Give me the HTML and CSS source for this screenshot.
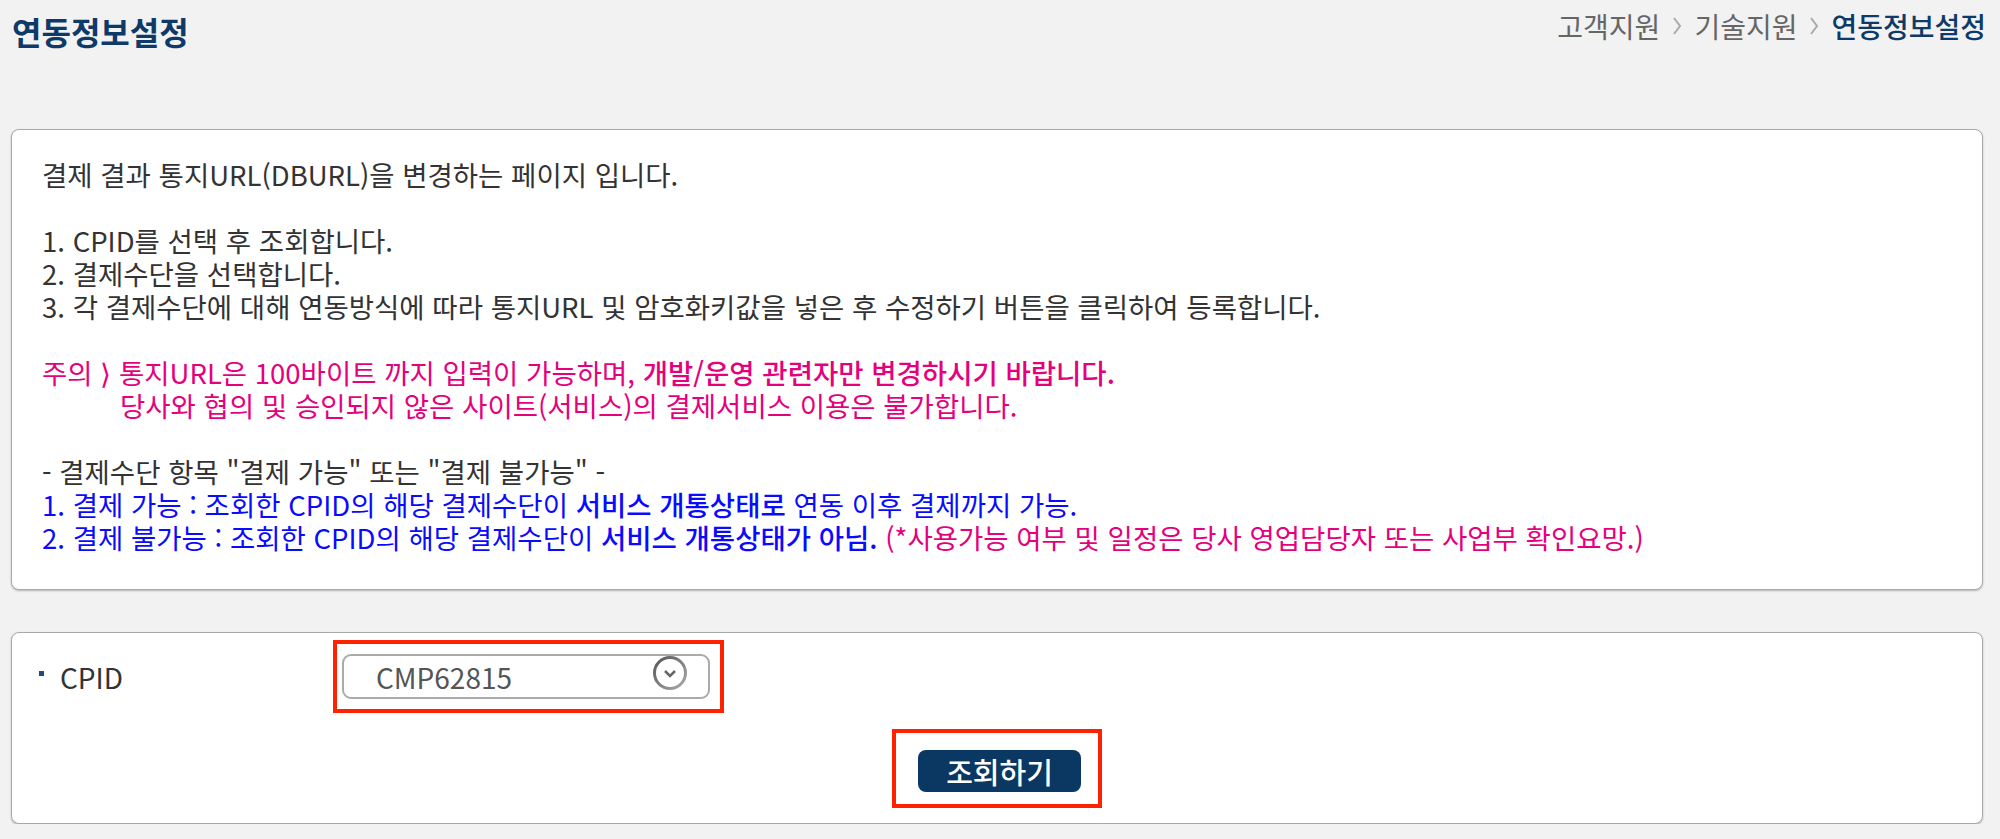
FILE: index.html
```html
<!DOCTYPE html>
<html lang="ko">
<head>
    <meta charset="UTF-8">
    <title>연동정보설정</title>
    <link rel="stylesheet" href="styles.css">
</head>
<body>
    <header class="top">
        <h1 class="title">연동정보설정</h1>
        <div class="crumbs">
            <span>고객지원</span>
            <svg class="sep" width="10" height="24" viewBox="0 0 10 24"><path d="M2 4 L8 12 L2 20" fill="none" stroke="#aaa" stroke-width="2"/></svg>
            <span>기술지원</span>
            <svg class="sep" width="10" height="24" viewBox="0 0 10 24"><path d="M2 4 L8 12 L2 20" fill="none" stroke="#aaa" stroke-width="2"/></svg>
            <span class="current">연동정보설정</span>
        </div>
    </header>

    <section class="panel guide">
        <p>결제 결과 통지URL(DBURL)을 변경하는 페이지 입니다.</p>
        <p class="blank"></p>
        <p>1. CPID를 선택 후 조회합니다.</p>
        <p>2. 결제수단을 선택합니다.</p>
        <p>3. 각 결제수단에 대해 연동방식에 따라 통지URL 및 암호화키값을 넣은 후 수정하기 버튼을 클릭하여 등록합니다.</p>
        <p class="blank"></p>
        <p class="pink">주의 ⟩ 통지URL은 100바이트 까지 입력이 가능하며, <b>개발/운영 관련자만 변경하시기 바랍니다.</b></p>
        <p class="pink indent">당사와 협의 및 승인되지 않은 사이트(서비스)의 결제서비스 이용은 불가합니다.</p>
        <p class="blank"></p>
        <p>- 결제수단 항목 "결제 가능" 또는 "결제 불가능" -</p>
        <p class="blue">1. 결제 가능 : 조회한 CPID의 해당 결제수단이 <b>서비스 개통상태로</b> 연동 이후 결제까지 가능.</p>
        <p class="blue">2. 결제 불가능 : 조회한 CPID의 해당 결제수단이 <b>서비스 개통상태가 아님.</b> <span class="pink">(*사용가능 여부 및 일정은 당사 영업담당자 또는 사업부 확인요망.)</span></p>
    </section>

    <section class="panel search">
        <div class="row">
            <div class="label"><i class="dot"></i>CPID</div>
            <div class="mark mark-select">
                <div class="select">
                    <span>CMP62815</span>
                    <svg class="arrow" width="36" height="36" viewBox="0 0 36 36">
                        <defs>
                            <linearGradient id="ring" x1="0" y1="0" x2="1" y2="1">
                                <stop offset="0" stop-color="#555"/>
                                <stop offset="1" stop-color="#aaa"/>
                            </linearGradient>
                        </defs>
                        <circle cx="18" cy="18" r="15.5" fill="#fff" stroke="url(#ring)" stroke-width="3"/>
                        <path d="M13 16 L18 21 L23 16" fill="none" stroke="#666" stroke-width="2.5"/>
                    </svg>
                </div>
            </div>
        </div>
        <div class="actions">
            <div class="mark mark-btn">
                <button class="btn">조회하기</button>
            </div>
        </div>
    </section>
</body>
</html>
```

FILE: styles.css
```css
body {
    margin: 0;
    background-color: #f2f2f2;
    font-family: "Noto Sans CJK KR", "Noto Sans", sans-serif;
    color: #333;
}
.top {
    display: flex;
    justify-content: space-between;
    align-items: flex-start;
    height: 129px;
    box-sizing: border-box;
    padding: 10px 14px 0 12px;
}
.title {
    margin: 0;
    font-size: 32px;
    line-height: 42px;
    font-weight: 700;
    color: #0d3a69;
}
.crumbs {
    display: flex;
    align-items: center;
    gap: 12px;
    font-size: 28px;
    line-height: 32px;
    color: #666;
}
.crumbs .current {
    color: #0d3a69;
    font-weight: 500;
}
.sep {
    display: block;
}
.panel {
    background-color: #fff;
    border: 1px solid #aaa;
    border-radius: 8px;
    box-shadow: 0 1px 2px rgba(0, 0, 0, 0.25);
    margin: 0 17px 0 11px;
}
.guide {
    padding: 28px 30px 35px;
    font-size: 27.5px;
    line-height: 33px;
}
.guide p {
    margin: 0;
}
.guide .blank {
    height: 33px;
}
.guide b {
    font-weight: 500;
}
.pink {
    color: #e5007e;
}
.blue {
    color: #0a0aff;
}
.indent {
    padding-left: 78px;
}
.search {
    margin-top: 42px;
    padding: 7px 0 15px;
}
.row {
    display: flex;
    align-items: center;
}
.label {
    width: 321px;
    box-sizing: border-box;
    padding-left: 27px;
    display: flex;
    align-items: center;
    font-size: 28px;
    color: #333;
}
.dot {
    width: 5px;
    height: 5px;
    background-color: #1e4b7a;
    margin: 0 16px 6px 0;
}
.mark {
    border: 4px solid #ff2200;
}
.mark-select {
    padding: 10px 10px 10px 5px;
}
.select {
    width: 368px;
    height: 45px;
    box-sizing: border-box;
    border: 2px solid #aaa;
    border-radius: 9px;
    display: flex;
    align-items: center;
    justify-content: space-between;
    padding: 0 20px 0 32px;
    font-size: 28px;
    color: #555;
}
.arrow {
    display: block;
    margin-top: -7px;
}
.actions {
    display: flex;
    justify-content: center;
    margin-top: 16px;
}
.mark-btn {
    padding: 17px 17px 12px 22px;
}
.btn {
    display: block;
    width: 163px;
    height: 42px;
    border: none;
    border-radius: 8px;
    background-color: #0b3763;
    color: #fff;
    font-family: "Noto Sans CJK KR", sans-serif;
    font-size: 29px;
    font-weight: 500;
    line-height: 42px;
    padding: 0;
}
```
